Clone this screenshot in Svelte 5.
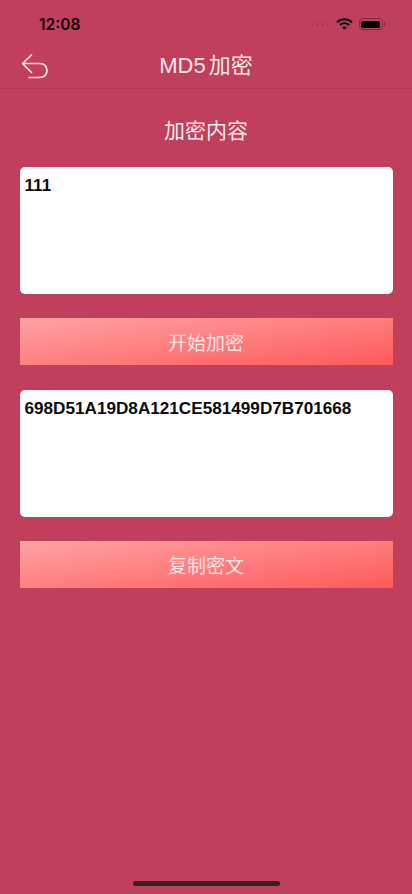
<script>
    let input = "111";
    let output = "698D51A19D8A121CE581499D7B701668";
</script>

<div class="page">
    <div class="status">
        <span class="time">12:08</span>
        <div class="status-icons">
            <div class="dots">
                <i></i><i></i><i></i><i></i>
            </div>
            <svg class="wifi" width="17" height="12" viewBox="0 0 18 13">
                <path d="M1 4.6 A11.5 11.5 0 0 1 17 4.6" fill="none" stroke="#000" stroke-width="2.1" />
                <path d="M4 7.6 A7.2 7.2 0 0 1 14 7.6" fill="none" stroke="#000" stroke-width="2.1" />
                <path d="M6.6 10.2 A3.4 3.4 0 0 1 11.4 10.2 L9 12.6 Z" fill="#000" />
            </svg>
            <div class="battery">
                <div class="battery-fill"></div>
            </div>
            <div class="battery-cap"></div>
        </div>
    </div>

    <header class="nav">
        <svg class="back" width="30" height="28" viewBox="0 0 30 28">
            <path
                d="M11.5 2 L2.5 10.5 L11.5 19.5 M3 10.5 H20 C24.5 10.5 27 13.8 27 17.5 C27 21.2 24.5 24.5 20 24.5 H9"
                fill="none"
                stroke="#fbe6ea"
                stroke-width="1.7"
                stroke-linecap="round"
                stroke-linejoin="round"
            />
        </svg>
        <h1>MD5<span class="gap"></span>加密</h1>
    </header>

    <main class="content">
        <h2>加密内容</h2>
        <div class="box">{input}</div>
        <button class="action">开始加密</button>
        <div class="box">{output}</div>
        <button class="action">复制密文</button>
    </main>

    <div class="home-bar"></div>
</div>

<style>
    :global(body) {
        margin: 0;
        background: #bf3f5d;
    }

    .page {
        position: relative;
        width: 412px;
        height: 894px;
        overflow: hidden;
        background: #bf3f5d;
        font-family: "Liberation Sans", "Noto Sans CJK SC", sans-serif;
    }

    .status {
        height: 44px;
        display: flex;
        align-items: center;
        justify-content: space-between;
        padding: 4px 27px 0 39px;
        box-sizing: border-box;
    }

    .time {
        font-family: Inter, "Liberation Sans", sans-serif;
        font-size: 15.5px;
        font-weight: 600;
        color: #14060a;
    }

    .status-icons {
        display: flex;
        align-items: center;
    }

    .dots {
        display: flex;
        gap: 2px;
        margin-right: 7px;
    }

    .dots i {
        width: 3px;
        height: 3px;
        border-radius: 50%;
        background: #a83a54;
    }

    .battery {
        width: 24px;
        height: 12px;
        margin-left: 6px;
        padding: 1.5px;
        box-sizing: border-box;
        border: 1px solid #7c2c40;
        border-radius: 4px;
    }

    .battery-fill {
        height: 100%;
        background: #000;
        border-radius: 2px;
    }

    .battery-cap {
        width: 1.5px;
        height: 4px;
        margin-left: 1px;
        background: #7c2c40;
    }

    .nav {
        height: 45px;
        box-sizing: border-box;
        padding-bottom: 6px;
        display: flex;
        align-items: center;
        justify-content: center;
        position: relative;
        border-bottom: 1px solid #b03a56;
    }

    .back {
        position: absolute;
        left: 20px;
        top: 9px;
    }

    h1 {
        margin: 0;
        font-size: 22px;
        font-weight: 400;
        color: #fbe9ed;
    }

    .gap {
        display: inline-block;
        width: 3px;
    }

    .content {
        display: flex;
        flex-direction: column;
        padding: 0 19.5px;
    }

    h2 {
        margin: 28px 0 22px;
        text-align: center;
        font-size: 21px;
        line-height: 28px;
        font-weight: 400;
        color: #fbe9ed;
    }

    .box {
        height: 127px;
        box-sizing: border-box;
        padding: 8px 5px;
        margin-bottom: 24px;
        background: #fff;
        border-radius: 5px;
        font-size: 17.15px;
        line-height: 20px;
        font-weight: 700;
        color: #0a0a0a;
    }

    .action {
        height: 47px;
        margin-bottom: 25px;
        padding: 0;
        border: none;
        background: linear-gradient(172deg, #ffa3a3, #ff5a5a);
        color: #fde4e6;
        font-family: inherit;
        font-size: 19px;
    }

    .home-bar {
        position: absolute;
        left: 133px;
        bottom: 8px;
        width: 147px;
        height: 5px;
        border-radius: 3px;
        background: #3a2026;
    }
</style>
